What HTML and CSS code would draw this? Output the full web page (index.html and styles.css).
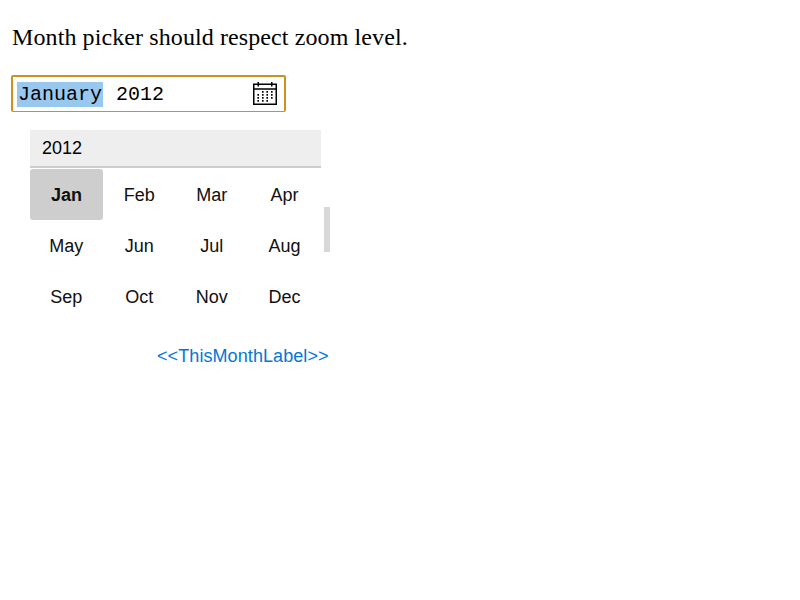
FILE: index.html
```html
<!DOCTYPE html>
<html lang="en">
<head>
<meta charset="utf-8">
<title>Month picker</title>
<link rel="stylesheet" href="styles.css">
</head>
<body>
<p class="intro">Month picker should respect zoom level.</p>
<div class="field">
  <span class="month">January</span><span class="year">2012</span>
  <svg class="icon" viewBox="0 0 24 23" width="24" height="23">
    <path fill="none" stroke="#000" stroke-width="1.5" d="M.75 2.25h22.5v20H.75zM0 7h24M5.25 0v4.5M18.75 0v4.5"/>
    <path fill="none" stroke="#000" stroke-width="1.6" stroke-dasharray="1.7 1.3" d="M5.2 12v8.5M9.8 9v11.5M14.2 9v11.5M18.8 9v8"/>
  </svg>
</div>
<div class="popup">
  <div class="list">
    <div class="heading">2012</div>
    <div class="months">
      <span class="selected">Jan</span><span>Feb</span><span>Mar</span><span>Apr</span>
      <span>May</span><span>Jun</span><span>Jul</span><span>Aug</span>
      <span>Sep</span><span>Oct</span><span>Nov</span><span>Dec</span>
    </div>
  </div>
  <div class="thumb"></div>
</div>
<div class="footer">&lt;&lt;ThisMonthLabel&gt;&gt;</div>
</body>
</html>
```
FILE: styles.css
```css
* { box-sizing: border-box; }
body { margin: 0; background: #fff; color: #000; }
.intro { margin: 24px 0 0 12px; font: 24px/27px "Liberation Serif", serif; letter-spacing: .1px; }
.field {
  display: flex; align-items: center;
  width: 275px; height: 37px; margin: 24px 0 0 11px; padding: 1px 7px 0 4px;
  border: 2px solid #d18f1f; border-bottom-width: 1px; border-radius: 2px;
  font: 20px/25px "Liberation Mono", monospace;
}
.month { background: #99c8ef; padding: 0 1px; }
.year { margin-left: 13px; }
.icon { margin: 0 0 2px auto; }
.popup { display: flex; margin: 18px 0 0 30px; font: 18px/20px "Liberation Sans", sans-serif; color: #101010; }
.list { width: 291px; }
.heading { height: 38px; padding: 8px 12px; background: #eee; border-bottom: 2px solid #cecece; color: #000; }
.months { display: grid; grid-template-columns: 72.5px 73.5px 71.5px 74px; grid-auto-rows: 51px; margin-top: 1px; }
.months span { display: flex; align-items: center; justify-content: center; }
.months .selected { width: 73px; background: #cecece; border-radius: 3px; font-weight: bold; }
.thumb { width: 6px; height: 45px; margin: 77px 0 0 3px; background: #d8d8d8; }
.footer { width: 328.6px; margin-top: 24px; text-align: right; font: 18px/20px "Liberation Sans", sans-serif; letter-spacing: .08px; color: #0078d7; }
```
